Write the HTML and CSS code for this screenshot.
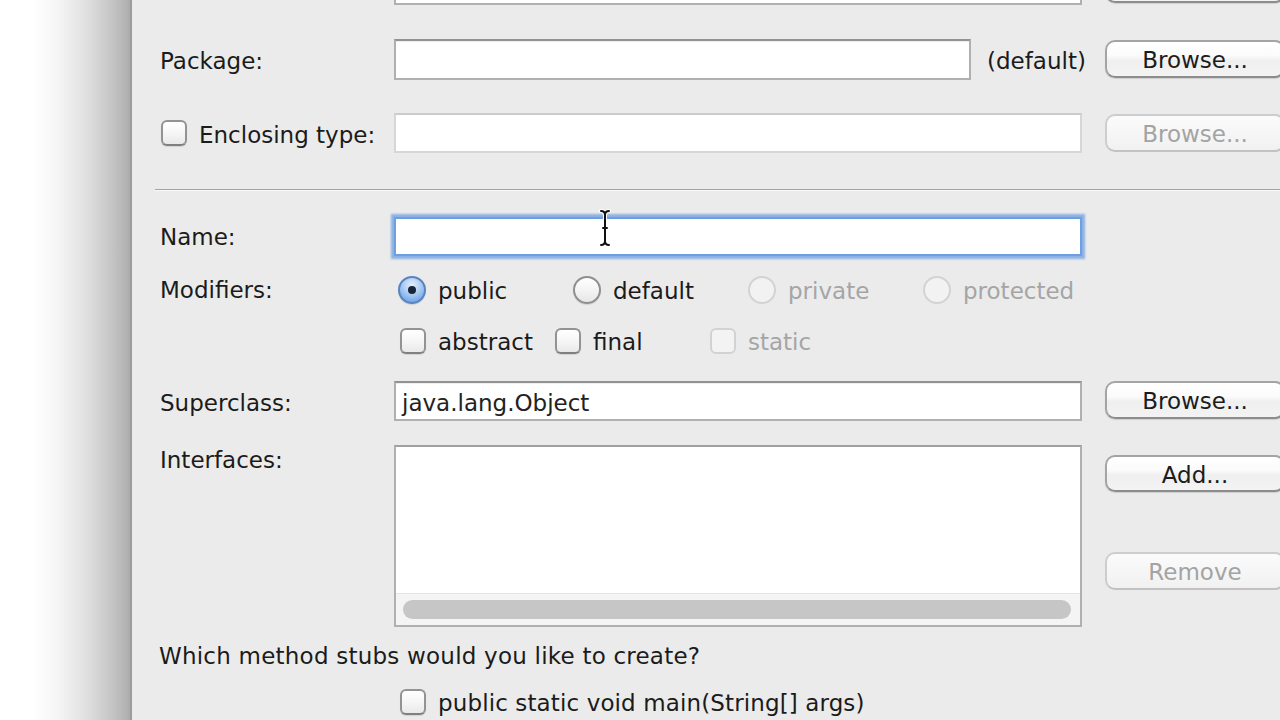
FILE: index.html
```html
<!DOCTYPE html>
<html>
<head>
<meta charset="utf-8">
<link rel="stylesheet" href="styles.css">
</head>
<body>
<div class="screen">
  <div class="backdrop"></div>
  <div class="dialog">
    <div class="row row-top">
      <div></div>
      <div class="field"></div>
      <div></div>
      <div class="btn btn-top"></div>
    </div>

    <div class="row row-package">
      <div class="label label-shift">Package:</div>
      <div class="field-with-suffix">
        <div class="field field-package"></div>
        <div class="suffix">(default)</div>
      </div>
      <div></div>
      <div class="btn btn-offset">Browse...</div>
    </div>

    <div class="row row-enclosing">
      <div class="label check-label">
        <span class="checkbox"></span>
        <span class="label-text">Enclosing type:</span>
      </div>
      <div class="field field-disabled"></div>
      <div></div>
      <div class="btn btn-offset btn-disabled">Browse...</div>
    </div>

    <div class="separator"></div>

    <div class="row row-name">
      <div class="label">Name:</div>
      <div class="field field-focus">
        <svg class="ibeam" width="14" height="38" viewBox="0 0 14 38">
          <path d="M3 2 Q7 2 7 6 Q7 2 11 2 M7 6 V32 M3 36 Q7 36 7 32 Q7 36 11 36 M5 19 H9" fill="none" stroke="#fff" stroke-width="4" stroke-linecap="round"/>
          <path d="M3 2 Q7 2 7 6 Q7 2 11 2 M7 6 V32 M3 36 Q7 36 7 32 Q7 36 11 36 M5 19 H9" fill="none" stroke="#111" stroke-width="2" stroke-linecap="round"/>
        </svg>
      </div>
    </div>

    <div class="row row-mod">
      <div class="label">Modifiers:</div>
      <div class="radio-group">
        <div class="option"><span class="radio radio-on"></span><span>public</span></div>
        <div class="option"><span class="radio"></span><span>default</span></div>
        <div class="option disabled"><span class="radio"></span><span>private</span></div>
        <div class="option disabled"><span class="radio"></span><span>protected</span></div>
      </div>
    </div>

    <div class="row row-check">
      <div></div>
      <div class="check-group">
        <div class="option"><span class="checkbox"></span><span>abstract</span></div>
        <div class="option"><span class="checkbox"></span><span>final</span></div>
        <div class="option disabled"><span class="checkbox"></span><span>static</span></div>
      </div>
    </div>

    <div class="row row-super">
      <div class="label label-shift">Superclass:</div>
      <div class="field field-text">java.lang.Object</div>
      <div></div>
      <div class="btn">Browse...</div>
    </div>

    <div class="row row-iface">
      <div class="label label-top">Interfaces:</div>
      <div class="listbox">
        <div class="list-body"></div>
        <div class="hscroll"><div class="thumb"></div></div>
      </div>
      <div></div>
      <div class="btn-stack">
        <div class="btn btn-add">Add...</div>
        <div class="btn btn-remove btn-disabled">Remove</div>
      </div>
    </div>

    <div class="question">Which method stubs would you like to create?</div>

    <div class="row row-main">
      <div></div>
      <div class="main-option option"><span class="checkbox"></span><span>public static void main(String[] args)</span></div>
    </div>
  </div>
</div>
</body>
</html>
```

FILE: styles.css
```css
html, body {
  margin: 0;
  padding: 0;
}

body {
  width: 1280px;
  height: 720px;
  overflow: hidden;
  font-family: "DejaVu Sans", "Liberation Sans", sans-serif;
  font-size: 23px;
  color: #1b1b1b;
  background: #fff;
}

.screen {
  display: flex;
  width: 1280px;
  height: 720px;
  overflow: hidden;
}

.backdrop {
  flex: 0 0 130px;
  background: linear-gradient(to right, #ffffff 0, #ffffff 32px, #f5f5f5 58px, #e0e0e0 86px, #c7c7c7 110px, #b2b2b2 127px, #aaaaaa 130px);
}

.dialog {
  flex: 0 0 1160px;
  background: #ebebeb;
  border-left: 2px solid #9c9c9c;
  padding-left: 28px;
  box-sizing: border-box;
}

.row {
  display: grid;
  grid-template-columns: 234px 688px 23px 180px;
  align-items: start;
}

.label {
  white-space: nowrap;
  display: flex;
  align-items: center;
  height: 100%;
  box-sizing: border-box;
}

.label-shift {
  padding-top: 3px;
}

.label-text {
  padding-top: 3px;
}

.label-top {
  height: auto;
  line-height: 30px;
  display: block;
}

/* text fields */
.field {
  box-sizing: border-box;
  height: 41px;
  background: #fff;
  border: 2px solid #b0b0b0;
  border-top-color: #929292;
  box-shadow: inset 0 1px 1px rgba(0, 0, 0, 0.07);
}

.field-disabled {
  height: 40px;
  border-color: #d6d6d6;
  border-top-color: #cbcbcb;
  box-shadow: none;
}

.field-text {
  height: 40px;
  padding-left: 6px;
  padding-top: 2px;
  line-height: 36px;
  color: #222;
}

.field-focus {
  position: relative;
  height: 39px;
  border: 2px solid #6f9fe0;
  box-shadow: 0 0 2px 3px rgba(115, 163, 228, 0.8);
}

.ibeam {
  position: absolute;
  left: 202px;
  top: -10px;
}

.field-with-suffix {
  display: flex;
  align-items: center;
  height: 41px;
}

.field-package {
  flex: 0 0 577px;
}

.suffix {
  margin-left: 16px;
  padding-top: 3px;
  white-space: nowrap;
}

/* buttons */
.btn {
  box-sizing: border-box;
  height: 38px;
  border: 2px solid #a4a4a4;
  border-bottom-color: #8c8c8c;
  border-radius: 10px;
  background: linear-gradient(#ffffff 0, #fbfbfb 40%, #efefef 55%, #f3f3f3 100%);
  box-shadow: 0 1px 1px rgba(0, 0, 0, 0.12);
  text-align: center;
  padding-top: 2px;
  line-height: 33px;
  color: #1c1c1c;
  white-space: nowrap;
}

.btn-disabled {
  color: #a3a3a3;
  border-color: #cdcdcd;
  border-bottom-color: #c2c2c2;
  background: linear-gradient(#fbfbfb, #f1f1f1);
  box-shadow: none;
}

.btn-offset {
  margin-top: 1px;
}

.btn-top {
  align-self: end;
  margin-bottom: 2px;
}

.btn-stack {
  display: flex;
  flex-direction: column;
}

.btn-add {
  margin-top: 10px;
  height: 37px;
}

.btn-remove {
  margin-top: 60px;
}

/* rows vertical rhythm */
.row-top {
  margin-top: -36px;
}

.row-package {
  margin-top: 34px;
}

.row-enclosing {
  margin-top: 33px;
  height: 40px;
}

.separator {
  margin-top: 36px;
  margin-left: -5px;
  border-top: 1px solid #a3a3a3;
  border-bottom: 1px solid #f9f9f9;
}

.row-name {
  margin-top: 26px;
  height: 39px;
}

.row-mod {
  margin-top: 19px;
  height: 30px;
  align-items: center;
}

.row-check {
  margin-top: 21px;
  height: 30px;
  align-items: center;
}

.row-super {
  margin-top: 25px;
  height: 40px;
}

.row-iface {
  margin-top: 24px;
}

.question {
  margin-top: 14px;
  margin-left: -1px;
  line-height: 30px;
  letter-spacing: 0.22px;
  white-space: nowrap;
}

.row-main {
  margin-top: 16px;
  height: 30px;
  align-items: center;
}

/* options */
.option {
  display: flex;
  align-items: center;
  gap: 12px;
  white-space: nowrap;
}

.option > span:last-child {
  padding-top: 2px;
}

.option.disabled {
  color: #a5a5a5;
}

.radio-group {
  display: grid;
  grid-template-columns: repeat(4, 175px);
  padding-left: 4px;
}

.check-group {
  display: grid;
  grid-template-columns: repeat(3, 155px);
  padding-left: 6px;
}

.main-option {
  padding-left: 6px;
  letter-spacing: 0.12px;
}

.check-label {
  gap: 12px;
}

.check-label .checkbox {
  margin-left: 1px;
}

.checkbox {
  box-sizing: border-box;
  flex: 0 0 26px;
  width: 26px;
  height: 26px;
  border: 2px solid #939393;
  border-bottom-color: #808080;
  border-radius: 6px;
  background: linear-gradient(#ffffff, #f6f6f6 50%, #e9e9e9);
  box-shadow: 0 1px 1px rgba(0, 0, 0, 0.1);
}

.disabled .checkbox {
  border-color: #d2d2d2;
  background: #f3f3f3;
  box-shadow: none;
}

.radio {
  box-sizing: border-box;
  position: relative;
  flex: 0 0 28px;
  width: 28px;
  height: 28px;
  border: 2px solid #8f8f8f;
  border-radius: 50%;
  background: linear-gradient(#ffffff, #f4f4f4 50%, #e6e6e6);
  box-shadow: 0 1px 1px rgba(0, 0, 0, 0.1);
}

.disabled .radio {
  border-color: #d3d3d3;
  background: #f2f2f2;
  box-shadow: none;
}

.radio-on {
  border-color: #5a84bf;
  background: radial-gradient(circle at 50% 30%, #e4effd 0, #a9cbf3 45%, #6fa3e6 85%, #5a90da 100%);
}

.radio-on::after {
  content: "";
  position: absolute;
  left: 50%;
  top: 50%;
  width: 8px;
  height: 8px;
  margin: -4px 0 0 -4px;
  border-radius: 50%;
  background: #17243a;
}

/* list box */
.listbox {
  box-sizing: border-box;
  height: 182px;
  border: 2px solid #b0b0b0;
  border-top-color: #a0a0a0;
  background: #fff;
  display: flex;
  flex-direction: column;
}

.list-body {
  flex: 1;
  background: #fff;
}

.hscroll {
  box-sizing: border-box;
  height: 32px;
  background: #f4f4f4;
  border-top: 1px solid #e4e4e4;
  padding: 6px 9px 0 7px;
}

.thumb {
  height: 19px;
  border-radius: 10px;
  background: #c6c6c6;
}
```
